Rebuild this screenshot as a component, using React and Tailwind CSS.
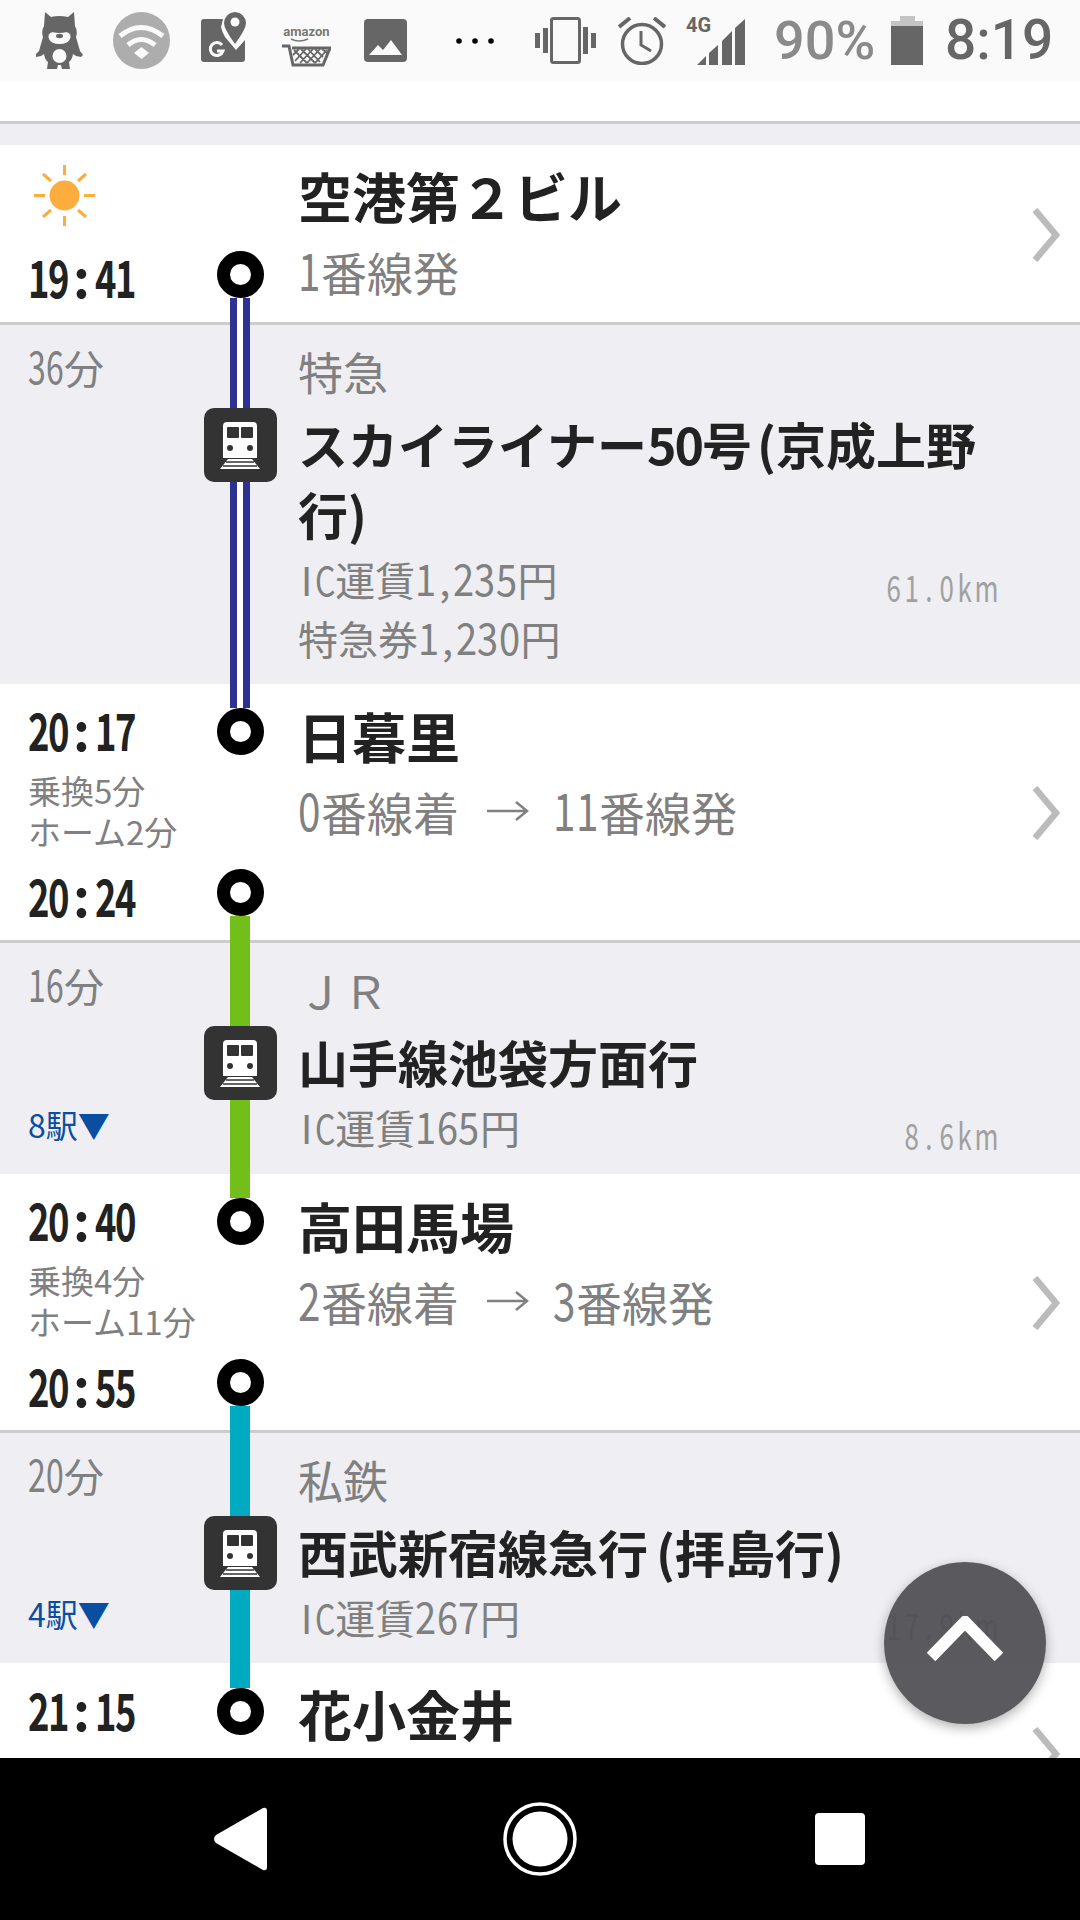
import React from "react";

const narrow = "font-['Noto_Sans_CJK_JP',sans-serif]";
const cjk = "font-['Noto_Sans_CJK_JP',sans-serif]";

// the app's font has tall narrow latin, so digits get squeezed one by one
const glyphs = {
  clock: {
    digit: "inline-block w-[0.385em] origin-[0_80%] scale-x-[0.7]",
    punct: "inline-block w-[0.52em] text-center",
  },
  mins: {
    digit: "inline-block w-[0.45em] origin-[0_80%] scale-x-[0.8] scale-y-[1.12]",
    punct: "inline-block w-[0.3em]",
  },
  fare: {
    digit: "inline-block w-[0.54em] origin-[0_80%] scale-x-[0.95] scale-y-[1.1]",
    punct: "inline-block w-[0.4em] text-center",
  },
  platform: {
    digit: "inline-block w-[0.5em] origin-[0_80%] scale-x-[0.88] scale-y-[1.12]",
    punct: "inline-block w-[0.3em]",
  },
};

const Squeezed = ({ text, kind }) =>
  text.split("").map((c, i) => {
    if (/[0-9]/.test(c)) return <span key={i} className={glyphs[kind].digit}>{c}</span>;
    if (/[:,.]/.test(c)) return <span key={i} className={glyphs[kind].punct}>{c}</span>;
    if (c === "I") return <span key={i} className="inline-block w-[0.43em] text-center">{c}</span>;
    if (c === "C") return <span key={i} className="inline-block w-[0.5em] origin-left scale-x-[0.8]">{c}</span>;
    return <span key={i}>{c}</span>;
  });

const Km = ({ text }) => (
  <span className={`${narrow} absolute right-[90px] top-[7px] flex text-[36px] leading-[58px] text-[#a0a0a0]`}>
    {text.split("").map((c, i) => (
      <span key={i} className="block w-[17.6px] text-center scale-x-[0.72]">{c}</span>
    ))}
  </span>
);

const Bear = () => (
  <svg width="47" height="57" viewBox="0 0 47 57" className="ml-[36px]">
    <path fill="#666" d="M9 0l6 5q8-2 17 0l6-5 1 14q3 5 1 11l4 14 3 4-2 2-5-1-3-2q-1 6-4 8l1 7H26l-1-4h-3l-1 4H11l1-7q-3-2-4-8l-3 2-5 1-1-2 4-4 4-14q-2-6 1-11z" />
    <ellipse cx="23.5" cy="44" rx="7" ry="7" fill="#fafafa" />
    <path fill="#fafafa" d="M13 27q-2-5 3-7 4 1 7.500 1 3.500 0 7.500-1 5 2 3 7-2 5-10.500 5-8.500 0-10.500-5z" />
    <ellipse cx="23.500" cy="24" rx="3.500" ry="2.200" fill="#666" />
    <circle cx="15" cy="19" r="1.500" fill="#666" />
    <circle cx="32" cy="19" r="1.500" fill="#666" />
  </svg>
);

const WifiBadge = () => (
  <svg width="57" height="57" viewBox="0 0 57 57" className="ml-[30px]">
    <circle cx="28.500" cy="28.500" r="28.500" fill="#adadad" />
    <path d="M7 24q21-17 43 0" fill="none" stroke="#fafafa" strokeWidth="5" />
    <path d="M15 33q13-11 27 0" fill="none" stroke="#fafafa" strokeWidth="5" />
    <path d="M21 41l7.500-6 7.500 6-7.500 6z" fill="#fafafa" />
  </svg>
);

const GeoIcon = () => (
  <svg width="45" height="50" viewBox="0 0 45 50" className="ml-[31px] self-start mt-[12px]">
    <path fill="#666" d="M3 7h19l-2 8q1 5 4 10l11 13 9-10v19q0 3-3 3H3q-3 0-3-3V10q0-3 3-3z" />
    <path fill="#666" d="M34 0q10 1 11 11 0 6-11 21Q23 17 23 11 24 1 34 0z" />
    <circle cx="34" cy="10" r="4.500" fill="#fafafa" />
    <path d="M21 33a6.500 6.500 0 1 0 1 6h-6" fill="none" stroke="#fafafa" strokeWidth="3" />
  </svg>
);

const AmazonIcon = () => (
  <div className="ml-[36px] w-[49px] mt-[26px] self-start flex flex-col items-center">
    <span className="font-['Roboto',sans-serif] font-bold text-[13px] leading-[12px] text-[#777]">amazon</span>
    <svg width="49" height="29" viewBox="0 0 49 29">
      <path d="M9 1q8 4 17 0" fill="none" stroke="#777" strokeWidth="1.500" />
      <path d="M0 8h7l4 19h30l7-17H10" fill="none" stroke="#666" strokeWidth="3" />
      <path
        d="M12 12l13 13M19 11l14 14M26 11l12 13M33 11l8 8M40 11l5 4M45 12L33 25M38 11L25 25M31 11L18 25M24 11L13 23M17 11l-6 6"
        fill="none"
        stroke="#666"
        strokeWidth="1.800"
      />
    </svg>
  </div>
);

const ImageIcon = () => (
  <svg width="43" height="43" viewBox="0 0 43 43" className="ml-[33px]">
    <rect width="43" height="43" rx="4" fill="#666" />
    <path fill="#fafafa" d="M5 36l9-10 5 5 8-10 11 15z" />
  </svg>
);

const DotsIcon = () => (
  <svg width="38" height="6" viewBox="0 0 38 6" className="ml-[49px]">
    <circle cx="3" cy="3" r="2.800" fill="#000" />
    <circle cx="19" cy="3" r="2.800" fill="#000" />
    <circle cx="35" cy="3" r="2.800" fill="#000" />
  </svg>
);

const VibrateIcon = () => (
  <svg width="61" height="47" viewBox="0 0 61 47" className="ml-[41px]">
    <rect x="0" y="16" width="5" height="15" fill="#666" />
    <rect x="8" y="11" width="5" height="25" fill="#666" />
    <rect x="16.500" y="1.500" width="28" height="44" rx="2" fill="none" stroke="#666" strokeWidth="3" />
    <rect x="48" y="10" width="5" height="27" fill="#666" />
    <rect x="56" y="16" width="5" height="15" fill="#666" />
  </svg>
);

const AlarmIcon = () => (
  <svg width="48" height="48" viewBox="0 0 48 48" className="ml-[22px]">
    <circle cx="24" cy="27" r="19.500" fill="none" stroke="#666" strokeWidth="3.500" />
    <path d="M23 14v14l10 6" fill="none" stroke="#666" strokeWidth="3" />
    <path d="M1 10L12 1M47 10L36 1" fill="none" stroke="#666" strokeWidth="4" />
  </svg>
);

const SignalIcon = () => (
  <div className="relative ml-[20px] w-[59px] h-[49px]">
    <svg width="59" height="49" viewBox="0 0 59 49" className="absolute bottom-0 left-0">
      <path fill="#666" d="M59 3v46H49V12zM46 15v34H36V25zM32 29v20H23V37zM20 40v9H11z" />
    </svg>
    <span className="absolute left-0 top-0 font-['Roboto',sans-serif] font-bold text-[20px] leading-[18px] text-[#666]">4G</span>
  </div>
);

const BatteryIcon = () => (
  <div className="ml-[16px] w-[32px] h-[49px] flex flex-col items-center">
    <div className="w-[15px] h-[5px] bg-[#c4c4c4]"></div>
    <div className="w-[32px] h-[5px] bg-[#c4c4c4]"></div>
    <div className="w-[32px] flex-1 bg-[#666]"></div>
  </div>
);

const StatusBar = () => (
  <div className="h-[81px] bg-[#fafafa] flex items-center shrink-0">
    <Bear />
    <WifiBadge />
    <GeoIcon />
    <AmazonIcon />
    <ImageIcon />
    <DotsIcon />
    <VibrateIcon />
    <AlarmIcon />
    <SignalIcon />
    <span className="ml-[29px] w-[101px] font-['Roboto',sans-serif] font-medium text-[54px] leading-none text-[#8a8a8a]">90%</span>
    <BatteryIcon />
    <span className="ml-[22px] font-['Roboto',sans-serif] font-medium text-[55px] leading-none text-[#666]">8:19</span>
  </div>
);

const Sun = () => (
  <svg width="61" height="61" viewBox="0 0 61 61" className="block ml-[6px]">
    <circle cx="30.500" cy="30.500" r="15" fill="#fdad3e" />
    <path
      d="M30.500 0v10M30.500 51v10M0 30.500h11M50 30.500h11M9 9l8 7M44 45l8 7M52 9l-8 7M17 45l-8 7"
      stroke="#fdad3e"
      strokeWidth="3"
      fill="none"
    />
  </svg>
);

const TrainBadge = () => (
  <div className="w-[73px] h-[74px] rounded-[10px] bg-[#333] flex items-center justify-center shrink-0">
    <svg width="40" height="47" viewBox="0 0 40 47">
      <path fill="#fff" d="M7 0h26q4 0 4 4v32H3V4q0-4 4-4z" />
      <rect x="7" y="5" width="12" height="11" rx="1" fill="#333" />
      <rect x="21" y="5" width="12" height="11" rx="1" fill="#333" />
      <circle cx="10" cy="26" r="3" fill="#333" />
      <circle cx="30" cy="26" r="3" fill="#333" />
      <path fill="#fff" d="M8 37h24l8 10H0z" />
      <path d="M6 40h28M3 44h34" stroke="#333" strokeWidth="1.500" />
    </svg>
  </div>
);

const Stop = () => (
  <div className="w-[47px] h-[47px] rounded-full border-[13.500px] border-black bg-white shrink-0"></div>
);

const Line = ({ kind, className = "" }) => {
  if (kind === "double") {
    return <div className={`w-[20px] border-x-[7px] border-[#2d3192] bg-white ${className}`}></div>;
  }
  if (kind === "green") {
    return <div className={`w-[20px] bg-[#72bf1c] ${className}`}></div>;
  }
  return <div className={`w-[20px] bg-[#00abc1] ${className}`}></div>;
};

const Chevron = ({ className = "" }) => (
  <svg width="28" height="54" viewBox="0 0 28 54" className={`absolute right-[20px] ${className}`}>
    <path d="M3 2l21 25L3 52" fill="none" stroke="#bbb" strokeWidth="6.500" />
  </svg>
);

const Clock = ({ text, className = "" }) => (
  <p className={`${narrow} font-bold text-[52px] leading-[52px] text-[#222] ${className}`}>
    <Squeezed text={text} kind="clock" />
  </p>
);

const Name = ({ children, className = "" }) => (
  <p className={`${cjk} font-bold text-[50px] leading-[70px] text-[#222] ${className}`}>{children}</p>
);

const Station = ({ children }) => (
  <p className={`${cjk} font-bold text-[54px] leading-[70px] text-[#222]`}>{children}</p>
);

const Transfer = ({ walk, home }) => (
  <div className={`${narrow} mt-[15px] text-[33px] leading-[41px] text-[#808080]`}>
    <p>乗換{walk}分</p>
    <p>ホーム{home}分</p>
  </div>
);

const FirstRow = () => (
  <div className="relative flex h-[180px] bg-white border-b-[3px] border-[#ccc]">
    <div className="w-[203px] pl-[28px] pt-[20px]">
      <Sun />
      <Clock text="19:41" className="mt-[24px]" />
    </div>
    <div className="w-[74px] -mb-[3px] flex flex-col items-center relative">
      <div className="h-[106px]"></div>
      <Stop />
      <Line kind="double" className="flex-1" />
    </div>
    <div className="pl-[21px] pt-[16px]">
      <Station>空港第２ビル</Station>
      <p className={`${narrow} mt-[11px] text-[46px] leading-[58px] text-[#808080]`}>
        <Squeezed text="1番線発" kind="platform" />
      </p>
    </div>
    <Chevron className="top-[63px]" />
  </div>
);

const Platforms = ({ from, to }) => (
  <p className={`${narrow} mt-[11px] text-[46px] leading-[58px] text-[#808080] flex items-center`}>
    <span><Squeezed text={`${from}番線着`} kind="platform" /></span>
    <svg width="42" height="24" viewBox="0 0 42 24" className="ml-[28px] mr-[24px]">
      <path d="M0 12h40M29 3l11 9-11 9" fill="none" stroke="#808080" strokeWidth="2.500" />
    </svg>
    <span><Squeezed text={`${to}番線発`} kind="platform" /></span>
  </p>
);

const TransferRow = ({ arrive, walk, home, depart, inKind, outKind, name, from, to }) => (
  <div className="relative flex h-[259px] bg-white border-b-[3px] border-[#ccc]">
    <div className="w-[203px] pl-[28px] pt-[19px]">
      <Clock text={arrive} />
      <Transfer walk={walk} home={home} />
      <Clock text={depart} className="mt-[17px]" />
    </div>
    <div className="w-[74px] -mb-[3px] flex flex-col items-center relative">
      <Line kind={inKind} className="h-[24px]" />
      <Stop />
      <div className="h-[114px]"></div>
      <Stop />
      <Line kind={outKind} className="flex-1" />
    </div>
    <div className="pl-[21px] pt-[17px]">
      <Station>{name}</Station>
      <Platforms from={from} to={to} />
    </div>
    <Chevron className="top-[102px]" />
  </div>
);

const Leg = ({ mins, stops, kind, type, name, fares, km, height }) => (
  <div className={`flex bg-[#eeeef3] ${height}`}>
    <div className="w-[203px] pl-[28px] pt-[18px] pb-[30px] flex flex-col justify-between">
      <p className={`${narrow} text-[40px] leading-[48px] text-[#808080]`}>
        <Squeezed text={`${mins}分`} kind="mins" />
      </p>
      {stops && (
        <p className={`${narrow} text-[32px] leading-[40px] text-[#0a4ea2]`}>{stops}駅▼</p>
      )}
    </div>
    <div className="w-[74px] flex flex-col items-center">
      <Line kind={kind} className="h-[83px]" />
      <TrainBadge />
      <Line kind={kind} className="flex-1" />
    </div>
    <div className="flex-1 pl-[21px] pt-[18px]">
      <p className={`${narrow} text-[45px] leading-[58px] text-[#808080]`}>{type}</p>
      <Name className="mt-[7px] mb-[2px] w-[710px]">{name}</Name>
      <div className="relative">
        {fares.map((f) => (
          <p key={f} className={`${narrow} text-[40px] leading-[59px] text-[#808080]`}>
            <Squeezed text={f} kind="fare" />
          </p>
        ))}
        <Km text={km} />
      </div>
    </div>
  </div>
);

const NavBar = () => (
  <div className="h-[162px] bg-black flex items-center shrink-0">
    <svg width="54" height="64" viewBox="0 0 54 64" className="ml-[213px]">
      <path fill="#fff" d="M50 1q4-1 4 3v56q0 4-4 3L3 36q-4-4 0-8z" />
    </svg>
    <svg width="74" height="74" viewBox="0 0 74 74" className="ml-[236px]">
      <circle cx="37" cy="37" r="35" fill="none" stroke="#fff" strokeWidth="3.500" />
      <circle cx="37" cy="37" r="27.500" fill="#fff" />
    </svg>
    <div className="ml-[238px] w-[50px] h-[52px] rounded-[4px] bg-white"></div>
  </div>
);

export default function App() {
  return (
    <div className="w-[1080px] h-[1920px] flex flex-col overflow-hidden bg-white">
      <StatusBar />
      <div className="relative flex-1 overflow-hidden">
        <div className="h-[40px] bg-white"></div>
        <div className="h-[24px] bg-[#eeeef3] border-t-[3px] border-[#ccc]"></div>
        <FirstRow />
        <Leg
          height="h-[359px]"
          mins="36"
          kind="double"
          type="特急"
          name={<>スカイライナー<span className="tracking-[-2px]">50</span>号<span className="ml-[5px]">(京成上野行)</span></>}
          fares={["IC運賃1,235円", "特急券1,230円"]}
          km="61.0km"
        />
        <TransferRow
          arrive="20:17" walk="5" home="2" depart="20:24"
          inKind="double" outKind="green"
          name="日暮里" from="0" to="11"
        />
        <Leg
          height="h-[231px]"
          mins="16"
          stops="8"
          kind="green"
          type="ＪＲ"
          name="山手線池袋方面行"
          fares={["IC運賃165円"]}
          km="8.6km"
        />
        <TransferRow
          arrive="20:40" walk="4" home="11" depart="20:55"
          inKind="green" outKind="teal"
          name="高田馬場" from="2" to="3"
        />
        <Leg
          height="h-[230px]"
          mins="20"
          stops="4"
          kind="teal"
          type="私鉄"
          name={<>西武新宿線急行<span className="ml-[8px]">(拝島行)</span></>}
          fares={["IC運賃267円"]}
          km="17.9km"
        />
        <div className="relative flex h-[200px] bg-white">
          <div className="w-[203px] pl-[28px] pt-[20px]">
            <Clock text="21:15" />
            <div className="pt-[3px]">
              <Transfer walk="3" home="2" />
            </div>
          </div>
          <div className="w-[74px] flex flex-col items-center">
            <Line kind="teal" className="h-[25px]" />
            <Stop />
          </div>
          <div className="pl-[21px] pt-[16px]">
            <Station>花小金井</Station>
          </div>
          <Chevron className="top-[64px]" />
        </div>
        <div className="absolute right-[34px] bottom-[34px] w-[162px] h-[162px] rounded-full bg-[#4c4c51]/92 shadow-[0_4px_12px_rgba(0,0,0,0.3)] flex items-center justify-center">
          <svg width="76" height="46" viewBox="0 0 76 46" className="-mt-[8px]">
            <path d="M4 41L38 6l34 35" fill="none" stroke="#fff" strokeWidth="12" />
          </svg>
        </div>
      </div>
      <NavBar />
    </div>
  );
}
